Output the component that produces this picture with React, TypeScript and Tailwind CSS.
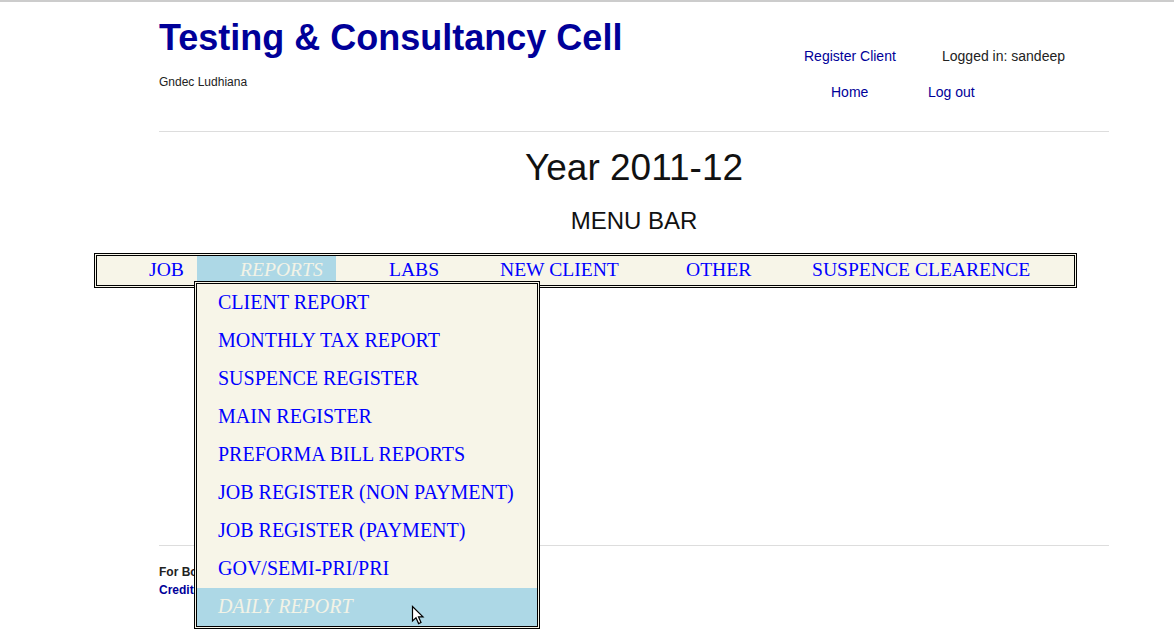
import React from "react";

const menuItems = [
  { label: "JOB", cell: "w-[100px] pl-[52px]" },
  { label: "REPORTS", cell: "w-[139px] pl-[43px]", active: true },
  { label: "LABS", cell: "w-[164px] pl-[53px]" },
  { label: "NEW CLIENT", cell: "w-[186px]" },
  { label: "OTHER", cell: "w-[126px]" },
  { label: "SUSPENCE CLEARENCE", cell: "flex-1" },
];

const reportItems = [
  "CLIENT REPORT",
  "MONTHLY TAX REPORT",
  "SUSPENCE REGISTER",
  "MAIN REGISTER",
  "PREFORMA BILL REPORTS",
  "JOB REGISTER (NON PAYMENT)",
  "JOB REGISTER (PAYMENT)",
  "GOV/SEMI-PRI/PRI",
  "DAILY REPORT",
];

function ReportsDropdown() {
  return (
    <div className="absolute left-[-3px] top-[25px] z-10 w-[346px] border-[3px] border-double border-black bg-[#f7f5e8] text-[20px] not-italic">
      {reportItems.map((item, i) => {
        const hovered = i === reportItems.length - 1;
        return (
          <div
            key={item}
            className={`h-[38px] pl-[21px] leading-[37px] whitespace-nowrap ${
              hovered ? "bg-[#add8e6] italic text-[#f3f3e6]" : "not-italic text-[#0000ff]"
            }`}
          >
            {item}
          </div>
        );
      })}
    </div>
  );
}

function Cursor() {
  return (
    <svg
      className="absolute left-[411px] top-[603px] z-20"
      width="14"
      height="21"
      viewBox="0 0 14 21"
    >
      <path
        d="M1.5 1.5 L1.5 16 L5 12.8 L7.6 18.6 L10 17.5 L7.5 11.8 L12 11.8 Z"
        fill="#ffffff"
        stroke="#000000"
        strokeWidth="1.2"
        strokeLinejoin="miter"
      />
    </svg>
  );
}

export default function App() {
  return (
    <div className="relative min-h-[630px] w-full overflow-hidden border-t-2 border-[#cccccc] bg-white font-['Liberation_Sans',Arial,sans-serif]">
      {/* Header */}
      <div className="ml-[159px] flex h-[130px] w-[950px] border-b border-[#dddddd]">
        <div className="pt-[18px]">
          <h1 className="text-[36px] leading-[36px] font-bold text-[#000099]">
            Testing &amp; Consultancy Cell
          </h1>
          <p className="mt-[19px] text-[12px] leading-[14px] text-[#222222]">Gndec Ludhiana</p>
        </div>
        <div className="ml-auto w-[305px] pt-[46px] text-[14px] leading-[16px]">
          <div className="flex">
            <a className="w-[138px] text-[#000099]">Register Client</a>
            <span className="text-[#222222]">Logged in: sandeep</span>
          </div>
          <div className="mt-[20px] flex">
            <a className="ml-[27px] w-[97px] text-[#000099]">Home</a>
            <a className="text-[#000099]">Log out</a>
          </div>
        </div>
      </div>

      {/* Titles */}
      <div className="ml-[159px] w-[950px] text-center text-[#111111]">
        <h2 className="mt-[18px] text-[37px] leading-[36px]">Year 2011-12</h2>
        <h3 className="mt-[23px] text-[24px] leading-[24px]">MENU BAR</h3>
      </div>

      {/* Menu bar */}
      <div className="mt-[20px] ml-[94px] h-[35px] w-[983px] border-[3px] border-double border-black bg-[#f7f5e8] font-['Liberation_Serif','Times_New_Roman',serif] text-[19.6px]">
        <div className="flex">
          {menuItems.map((m) => (
            <div
              key={m.label}
              className={`relative h-[26px] leading-[28px] whitespace-nowrap ${m.cell} ${
                m.active ? "bg-[#add8e6] text-[#f3f3e6]" : "text-[#0000ff]"
              }`}
            >
              <span className={m.active ? "italic" : ""}>{m.label}</span>
              {m.active && <ReportsDropdown />}
            </div>
          ))}
        </div>
      </div>

      {/* Footer */}
      <div className="mt-[257px] ml-[159px] w-[950px] border-t border-[#dddddd] pt-[17px] text-[12px] leading-[18px] font-bold">
        <p className="text-[#222222]">For Bookings</p>
        <p className="text-[#000099]">Credits</p>
      </div>

      <Cursor />
    </div>
  );
}
